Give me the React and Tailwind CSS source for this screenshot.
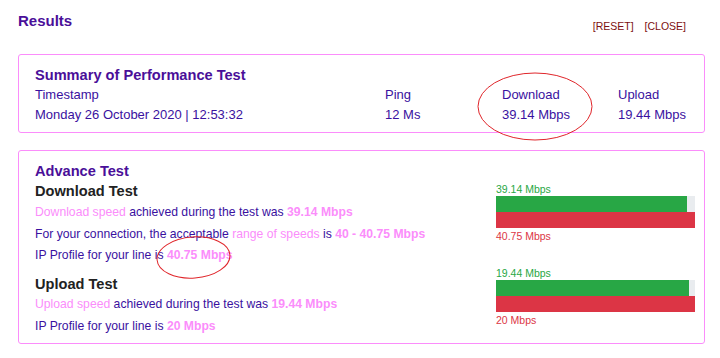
import React from 'react';

// Bar data for the advance test panel
const bars = [
  { measured: 39.14, profile: 40.75 },
  { measured: 19.44, profile: 20 },
];

const Pink = ({ children, bold }) => (
  <span className={`text-[#fb8dfb] ${bold ? 'font-bold' : ''}`}>{children}</span>
);

const SpeedBar = ({ measured, profile, className }) => (
  <div className={className}>
    <div className="text-[10.5px] leading-[13px] text-[#28a745]">{measured} Mbps</div>
    <div className="h-[16px] bg-[#e9ecef]">
      <div className="h-full bg-[#28a745]" style={{ width: `${(measured / profile) * 100}%` }} />
    </div>
    <div className="h-[16px] bg-[#dc3545]" />
    <div className="mt-[2px] text-[10.5px] leading-[13px] text-[#dc3545]">{profile} Mbps</div>
  </div>
);

const App = () => {
  return (
    <div
      className="relative w-[720px] h-[358px] bg-white pl-[18px] pr-[15px] pt-[11px]"
      style={{ fontFamily: "'Liberation Sans', Arial, sans-serif" }}
    >
      {/* Header */}
      <div className="flex items-start justify-between">
        <h1 className="text-[15px] leading-[20px] font-bold text-[#4a0f99]">Results</h1>
        <div className="mt-[9px] mr-[19px] flex gap-[11px] text-[10.5px] leading-[13px] text-[#7d1010]">
          <span>[RESET]</span>
          <span>[CLOSE]</span>
        </div>
      </div>

      {/* Summary */}
      <div className="mt-[21px] rounded-[3px] border border-[#fb8dfb] pl-[16px] pt-[10px] pb-[7px]">
        <h2 className="text-[14.6px] leading-[20px] font-bold text-[#4a0f99]">Summary of Performance Test</h2>
        <div className="grid grid-cols-[350px_117px_116px_1fr] text-[13px] leading-[20px] text-[#3a11a0]">
          <div>Timestamp</div>
          <div>Ping</div>
          <div>Download</div>
          <div>Upload</div>
          <div>Monday 26 October 2020 | 12:53:32</div>
          <div>12 Ms</div>
          <div>39.14 Mbps</div>
          <div>19.44 Mbps</div>
        </div>
      </div>

      {/* Advance test */}
      <div className="mt-[17px] flex rounded-[3px] border border-[#fb8dfb] pl-[16px] pr-[9px] pt-[10px] pb-[6px]">
        <div className="flex-1">
          <h2 className="text-[14.6px] leading-[20px] font-bold text-[#4a0f99]">Advance Test</h2>
          <h3 className="text-[14.6px] leading-[21px] font-bold text-[#222]">Download Test</h3>
          <div className="text-[12.2px] leading-[21.5px] text-[#3a11a0]">
            <p><Pink>Download speed</Pink> achieved during the test was <Pink bold>39.14 Mbps</Pink></p>
            <p>For your connection, the acceptable <Pink>range of speeds</Pink> is <Pink bold>40 - 40.75 Mbps</Pink></p>
            <p>IP Profile for your line is <Pink bold>40.75 Mbps</Pink></p>
          </div>
          <h3 className="mt-[7.5px] text-[14.6px] leading-[20px] font-bold text-[#222]">Upload Test</h3>
          <div className="text-[12.2px] leading-[21.5px] text-[#3a11a0]">
            <p><Pink>Upload speed</Pink> achieved during the test was <Pink bold>19.44 Mbps</Pink></p>
            <p>IP Profile for your line is <Pink bold>20 Mbps</Pink></p>
          </div>
        </div>
        <div className="w-[199px] pt-[22px]">
          <SpeedBar {...bars[0]} />
          <SpeedBar {...bars[1]} className="mt-[24px]" />
        </div>
      </div>

      {/* Hand-drawn annotation circles */}
      <svg className="pointer-events-none absolute inset-0" width="720" height="358">
        <ellipse cx="535" cy="106.5" rx="57" ry="33.5" fill="none" stroke="#e0262b" strokeWidth="1" />
        <ellipse cx="193.5" cy="257.5" rx="36.5" ry="20.5" fill="none" stroke="#e0262b" strokeWidth="1" transform="rotate(-4 193.5 257.5)" />
      </svg>
    </div>
  );
};

export default App;
